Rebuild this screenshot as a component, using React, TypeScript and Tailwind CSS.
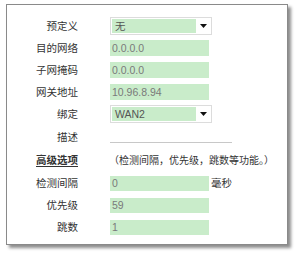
const font = { fontFamily: '"Liberation Sans", "Noto Sans CJK SC", sans-serif' };

function Label({ children, strong }: { children: React.ReactNode; strong?: boolean }) {
  return (
    <div
      className={
        "w-[71px] shrink-0 text-right text-[10.5px] leading-none text-[#333] " +
        (strong ? "font-bold underline underline-offset-2 text-[#111]" : "")
      }
    >
      {children}
    </div>
  );
}

function Field({ value, small }: { value: string; small?: boolean }) {
  return (
    <div
      className={
        "w-[99px] bg-[#c9ecca] flex items-center pl-[2px] text-[10.5px] leading-none text-[#7a7a7a] " +
        (small ? "h-[15px]" : "h-[16px]")
      }
    >
      {value}
    </div>
  );
}

function Select({ value }: { value: string }) {
  return (
    <div className="w-[102px] h-[18px] border border-[#dcdcdc] bg-white flex items-center p-[1px]">
      <div className="w-[84px] h-full bg-[#c9ecca] flex items-center pl-[3px] text-[10.5px] leading-none text-[#555]">
        {value}
      </div>
      <div className="flex-1 flex justify-center">
        <svg width="7" height="4" viewBox="0 0 7 4">
          <path d="M0 0h7L3.5 4z" fill="#111" />
        </svg>
      </div>
    </div>
  );
}

export default function App() {
  return (
    <div className="w-[300px] h-[255px] bg-white pt-[4px] pl-[6px]" style={font}>
      <div className="w-[282px] h-[241px] border border-[#8a8a8a] bg-white shadow-[3px_3px_3px_rgba(0,0,0,0.45)] pt-[10px]">
        <div className="flex items-center h-[22px]">
          <Label>预定义</Label>
          <div className="ml-[32px]">
            <Select value="无" />
          </div>
        </div>
        <div className="flex items-center h-[22px]">
          <Label>目的网络</Label>
          <div className="ml-[32px]">
            <Field value="0.0.0.0" />
          </div>
        </div>
        <div className="flex items-center h-[22px]">
          <Label>子网掩码</Label>
          <div className="ml-[32px]">
            <Field value="0.0.0.0" />
          </div>
        </div>
        <div className="flex items-center h-[22px]">
          <Label>网关地址</Label>
          <div className="ml-[32px]">
            <Field value="10.96.8.94" />
          </div>
        </div>
        <div className="flex items-center h-[22px]">
          <Label>绑定</Label>
          <div className="ml-[32px]">
            <Select value="WAN2" />
          </div>
        </div>
        <div className="flex items-center h-[24px]">
          <Label>描述</Label>
          <div className="ml-[32px] w-[122px] h-[13px] self-end mb-[6px] border-b border-[#c8c8c8]" />
        </div>
        <div className="flex items-center h-[23px]">
          <Label strong>高级选项</Label>
          <div className="ml-[31px] text-[10px] leading-none text-[#333]">
            （检测间隔，优先级，跳数等功能。）
          </div>
        </div>
        <div className="flex items-center h-[22px]">
          <Label>检测间隔</Label>
          <div className="ml-[32px] flex items-center gap-[2px]">
            <Field value="0" small />
            <span className="text-[10.5px] leading-none text-[#333]">毫秒</span>
          </div>
        </div>
        <div className="flex items-center h-[22px]">
          <Label>优先级</Label>
          <div className="ml-[32px]">
            <Field value="59" small />
          </div>
        </div>
        <div className="flex items-center h-[22px]">
          <Label>跳数</Label>
          <div className="ml-[32px]">
            <Field value="1" small />
          </div>
        </div>
      </div>
    </div>
  );
}
